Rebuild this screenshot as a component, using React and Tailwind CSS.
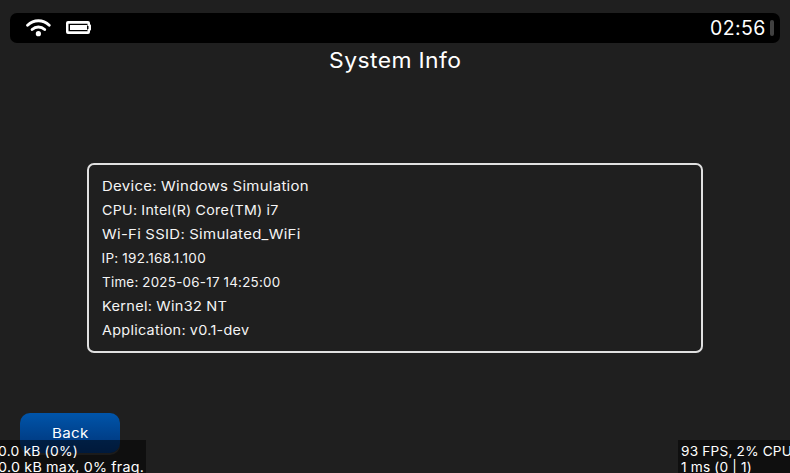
import { useLayoutEffect, useRef, useState } from "react";

// Text stretched horizontally so that it fills the given width.
function Label({ text, width, className = "" }) {
  const ref = useRef(null);
  const [scale, setScale] = useState(1);
  useLayoutEffect(() => {
    setScale(width / ref.current.offsetWidth);
  }, [text, width]);
  return (
    <span className={`block shrink-0 ${className}`} style={{ width: `${width}px` }}>
      <span
        ref={ref}
        className="block w-max origin-left font-[430] tracking-[0.02em] whitespace-pre [word-spacing:-0.02em]"
        style={{ transform: `scaleX(${scale})` }}
      >
        {text}
      </span>
    </span>
  );
}

const rows = [
  ["Device: Windows Simulation", 207],
  ["CPU: Intel(R) Core(TM) i7", 177],
  ["Wi-Fi SSID: Simulated_WiFi", 199],
  ["IP: 192.168.1.100", 104],
  ["Time: 2025-06-17 14:25:00", 178],
  ["Kernel: Win32 NT", 125],
  ["Application: v0.1-dev", 147],
];

function WifiIcon() {
  return (
    <svg className="h-[20px] w-[26px]" viewBox="0 0 26 20" fill="none" stroke="white" strokeWidth="2.9" strokeLinecap="round">
      <path d="M2.6 7.2C8.8 1.3 18 1.3 24.2 7.2" />
      <path d="M7.1 11.5C10.8 8.1 16 8.1 19.7 11.5" />
      <circle cx="13.4" cy="15.7" r="2.6" fill="white" stroke="none" />
    </svg>
  );
}

function BatteryIcon() {
  return (
    <svg className="h-[14px] w-[26px]" viewBox="0 0 26 14" fill="none">
      <path d="M2 0H22a2 2 0 0 1 2 2v1.3a1.2 1.2 0 0 1 1 1.2v4a1.2 1.2 0 0 1-1 1.2V11a2 2 0 0 1-2 2H2a2 2 0 0 1-2-2V2a2 2 0 0 1 2-2z" fill="white" />
      <path d="M2.5 2.7h19v2.4h1v2.8h-1v2.4h-19z" fill="black" />
      <rect x="4" y="4" width="17" height="5" fill="white" />
    </svg>
  );
}

export default function App() {
  return (
    <div className="relative flex h-[473px] w-[790px] flex-col overflow-hidden bg-[#1f1f1f] pt-[13px] font-['Inter','Liberation_Sans',sans-serif] text-[13.5px] leading-4 text-white">
      <header className="mx-[10px] flex h-[30px] shrink-0 items-center rounded-[7px] bg-black pr-[6px] pl-[15px]">
        <WifiIcon />
        <div className="ml-[15px]">
          <BatteryIcon />
        </div>
        <Label text="02:56" width={56} className="ml-auto text-[19.5px] leading-[30px]" />
        <div className="ml-[4px] h-4 w-1 rounded-full bg-[#404040]" />
      </header>
      <h1 className="mt-[4px] flex h-[26px] justify-center text-[21.5px] leading-[26px]">
        <Label text="System Info" width={132} />
      </h1>
      <main className="mx-auto mt-[90px] flex h-[190px] w-[616px] shrink-0 flex-col gap-2 rounded-[7px] border-2 border-[#e0e0e0] px-[12.5px] pt-[13px] text-[#f5f5f5]">
        {rows.map(([text, width]) => (
          <div key={text} className="h-4">
            <Label text={text} width={width} />
          </div>
        ))}
      </main>
      <button className="mt-[60px] ml-5 flex h-10 w-[100px] shrink-0 items-center justify-center rounded-[10px] bg-linear-to-b from-[#0055aa] to-[#003377] shadow-[0_2px_0_#363636]">
        <Label text="Back" width={37} />
      </button>
      <div className="absolute top-[440px] left-0 flex h-[33px] w-[146px] flex-col bg-black/50 pt-[3px]">
        <Label text="0.0 kB (0%)" width={80} className="-ml-[2px]" />
        <Label text="0.0 kB max, 0% frag." width={146} className="-ml-[2px]" />
      </div>
      <div className="absolute top-[440px] right-0 flex h-[33px] w-[112px] flex-col overflow-hidden bg-black/50 pt-[3px] pl-[3px]">
        <Label text="93 FPS, 2% CPU" width={111} />
        <Label text="1 ms (0 | 1)" width={71} />
      </div>
    </div>
  );
}
